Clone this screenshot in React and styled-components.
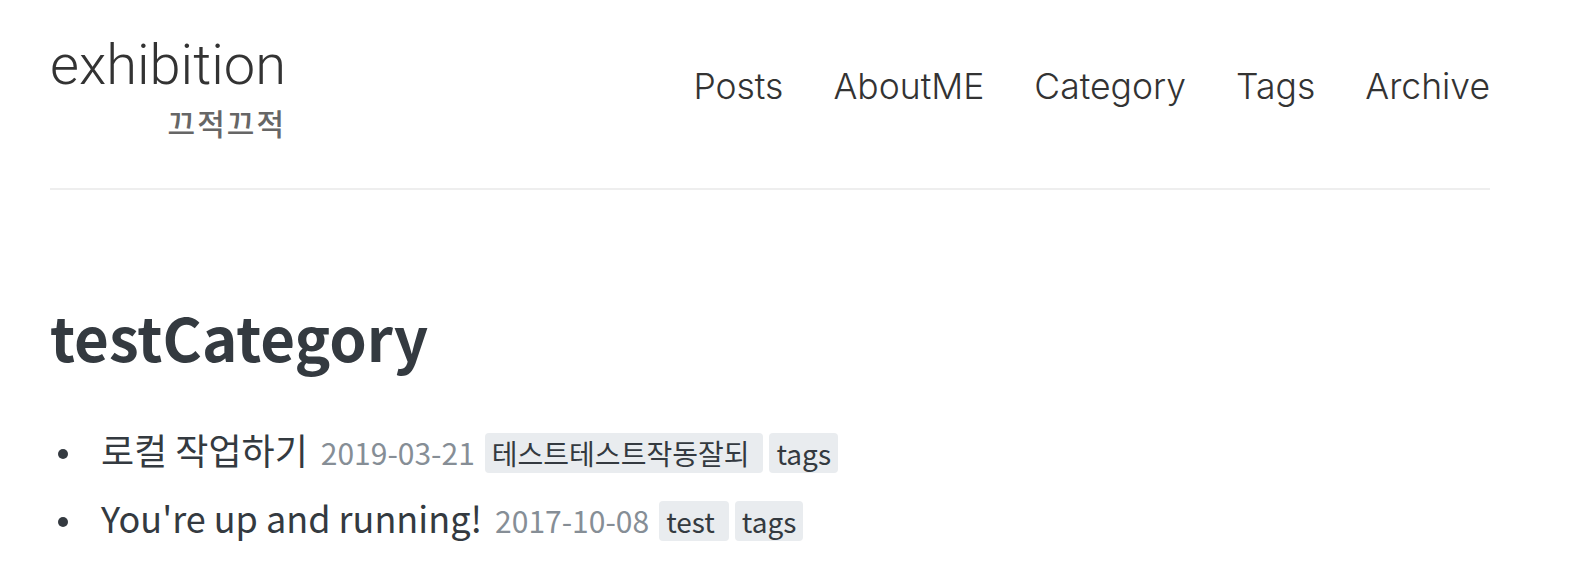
import styled, { createGlobalStyle } from 'styled-components';

const GlobalStyle = createGlobalStyle`
  body {
    margin: 0;
    background: #fff;
    color: #343a40;
    font-family: "Noto Sans CJK KR", "Noto Sans", sans-serif;
  }
  a {
    color: inherit;
    text-decoration: none;
  }
`;

const Page = styled.div`
  width: 1440px;
  padding: 0 100px 0 50px;
`;

const Header = styled.header`
  display: flex;
  justify-content: space-between;
  align-items: flex-start;
  padding: 37px 0 51px;
  border-bottom: 2px solid #eee;
`;

const Logo = styled.a`
  display: flex;
  flex-direction: column;
  align-items: flex-end;
`;

const LogoTitle = styled.span`
  font-family: Roboto, "Liberation Sans", sans-serif;
  font-weight: 300;
  font-size: 56px;
  line-height: 1;
  color: #333;
`;

const LogoSub = styled.span`
  margin-top: 14px;
  font-size: 30px;
  font-weight: 500;
  letter-spacing: 2px;
  line-height: 1;
  color: #666;
`;

const Nav = styled.nav`
  display: flex;
  gap: 50px;
  margin-top: 32px;
`;

const NavLink = styled.a`
  font-family: Inter, Roboto, "Liberation Sans", sans-serif;
  font-weight: 300;
  font-size: 35.5px;
  line-height: 1;
  color: #333;
`;

const Main = styled.main`
  padding-top: 110px;
`;

const Heading = styled.h1`
  margin: 0 0 47px;
  font-size: 60px;
  font-weight: 700;
  line-height: 1.2;
`;

const PostList = styled.ul`
  margin: 0;
  padding: 0;
  list-style: none;
`;

const PostItem = styled.li`
  font-size: 36px;
  line-height: 60px;
  margin-bottom: 5px;

  &::before {
    content: "";
    display: inline-block;
    width: 10px;
    height: 10px;
    margin: 0 33px 0 8px;
    border-radius: 50%;
    background: #343a40;
    vertical-align: 6px;
  }
`;

const PostTitle = styled.a`
  margin-right: 13px;
  color: #343a40;
`;

const PostDate = styled.span`
  font-size: 30px;
  color: #868e96;
  margin-right: 10px;
`;

const Tag = styled.span`
  display: inline-block;
  font-size: 28px;
  line-height: normal;
  padding: 0 ${p => (p.$last ? 7 : 14)}px 0 7px;
  margin-right: 6px;
  border-radius: 4px;
  background: #e9ecef;
  color: #343a40;
`;

const menu = ['Posts', 'AboutME', 'Category', 'Tags', 'Archive'];

const posts = [
  { title: '로컬 작업하기', date: '2019-03-21', tags: ['테스트테스트작동잘되', 'tags'] },
  { title: "You're up and running!", date: '2017-10-08', tags: ['test', 'tags'] },
];

const App = () => {
  return (
    <Page>
      <GlobalStyle />
      <Header>
        <Logo href="#">
          <LogoTitle>exhibition</LogoTitle>
          <LogoSub>끄적끄적</LogoSub>
        </Logo>
        <Nav>
          {menu.map(item => (
            <NavLink key={item} href="#">{item}</NavLink>
          ))}
        </Nav>
      </Header>
      <Main>
        <Heading>testCategory</Heading>
        <PostList>
          {posts.map(post => (
            <PostItem key={post.title}>
              <PostTitle href="#">{post.title}</PostTitle>
              <PostDate>{post.date}</PostDate>
              {post.tags.map((tag, i) => (
                <Tag key={tag} $last={i === post.tags.length - 1}>{tag}</Tag>
              ))}
            </PostItem>
          ))}
        </PostList>
      </Main>
    </Page>
  );
};

export default App;
